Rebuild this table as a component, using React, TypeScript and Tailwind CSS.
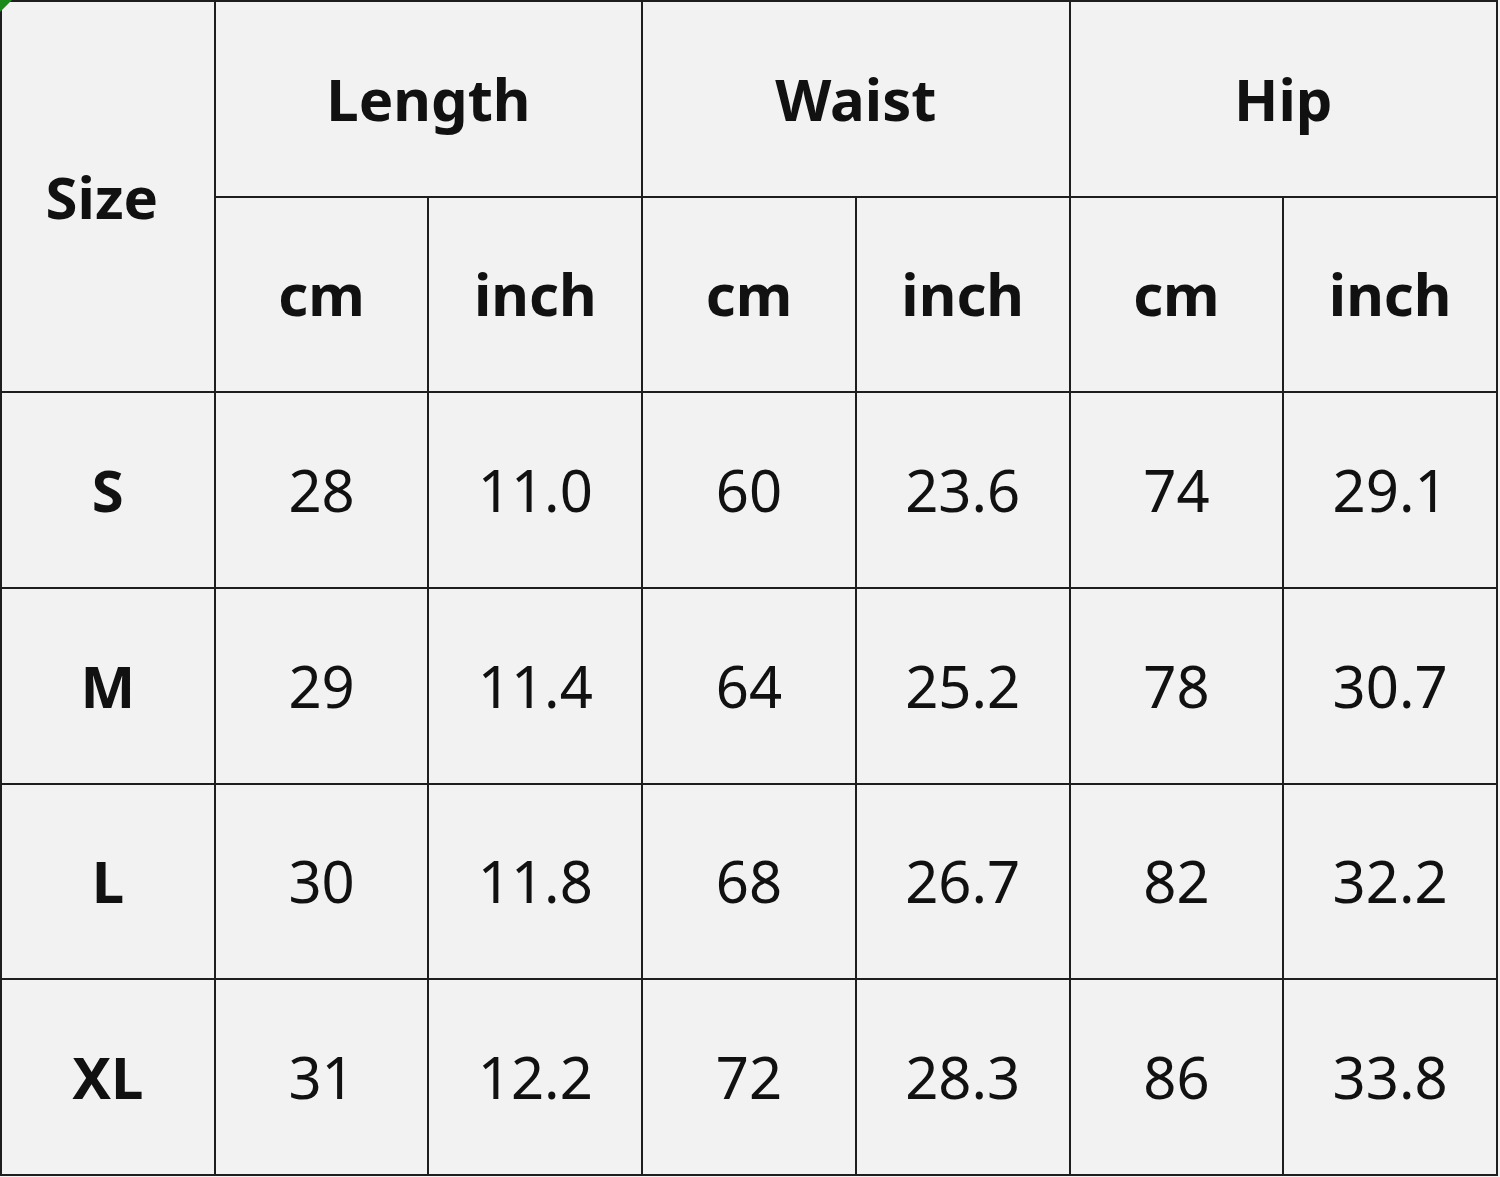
const rows = [
  ["S", "28", "11.0", "60", "23.6", "74", "29.1"],
  ["M", "29", "11.4", "64", "25.2", "78", "30.7"],
  ["L", "30", "11.8", "68", "26.7", "82", "32.2"],
  ["XL", "31", "12.2", "72", "28.3", "86", "33.8"],
];

const Cell = ({ children, className = "" }: { children?: React.ReactNode; className?: string }) => (
  <div className={`flex items-center justify-center bg-[#f2f2f2] ${className}`}>{children}</div>
);

export default function App() {
  return (
    <div className="relative w-[1500px] h-[1177px] bg-[#f2f2f2] text-[#111] font-['Noto_Sans','Noto_Sans_CJK_SC',sans-serif] text-[58px] leading-none">
      <div className="grid grid-cols-7 grid-rows-6 gap-[2px] p-[2px] bg-[#1e1e1e] w-[1498px] h-[1176px]">
        <Cell className="row-span-2 font-bold pr-[12px]">Size</Cell>
        <Cell className="col-span-2 font-bold">Length</Cell>
        <Cell className="col-span-2 font-bold">Waist</Cell>
        <Cell className="col-span-2 font-bold">Hip</Cell>
        {["cm", "inch", "cm", "inch", "cm", "inch"].map((u, i) => (
          <Cell key={i} className="font-bold">{u}</Cell>
        ))}
        {rows.map((r) =>
          r.map((v, i) => (
            <Cell key={r[0] + i} className={i === 0 ? "font-bold" : ""}>{v}</Cell>
          ))
        )}
      </div>
      <div className="absolute left-0 top-0 w-0 h-0 border-t-[12px] border-r-[12px] border-t-[#1a8a1a] border-r-transparent" />
    </div>
  );
}
